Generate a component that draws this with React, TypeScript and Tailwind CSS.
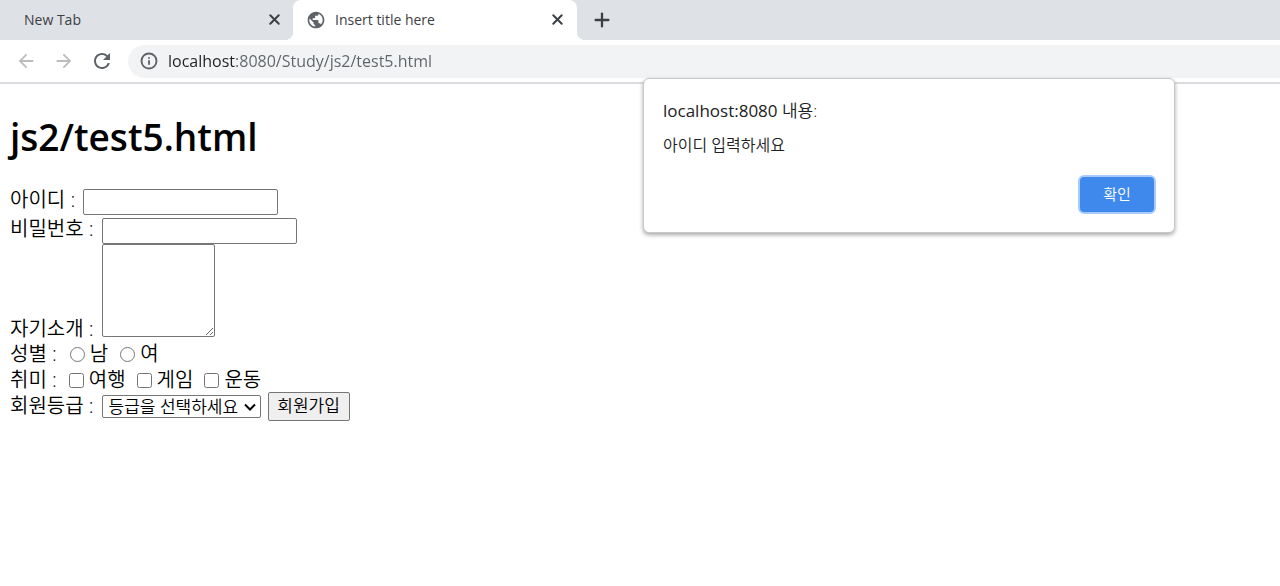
import type { ReactNode } from 'react';
import { Info, Plus, X } from 'lucide-react';
import { MdArrowBack, MdArrowForward, MdPublic, MdRefresh } from 'react-icons/md';

function TabStrip() {
  return (
    <div className="flex h-10 bg-[#dee1e6] pb-px text-[14px] font-normal text-[#3c4043]">
      <div className="flex w-[293px] items-center justify-between pl-6 pr-[10px]">
        <span>New Tab</span>
        <button type="button" aria-label="Close New Tab">
          <X size={17} strokeWidth={2.75} />
        </button>
      </div>
      <div className="relative -mb-px flex w-[284px] items-center rounded-t-lg bg-white pb-px pl-[13px] pr-[11px]">
        <span className="absolute -left-2 bottom-0 size-2 bg-[radial-gradient(circle_at_0_0,#dee1e6_8px,white_8px)]" />
        <MdPublic size={20} className="text-[#5f6368]" />
        <span className="ml-[9px] grow">Insert title here</span>
        <button type="button" aria-label="Close Insert title here">
          <X size={17} strokeWidth={2.75} />
        </button>
        <span className="absolute -right-2 bottom-0 size-2 bg-[radial-gradient(circle_at_100%_0,#dee1e6_8px,white_8px)]" />
      </div>
      <button type="button" aria-label="New tab" className="ml-[14px]">
        <Plus size={22} strokeWidth={2.5} />
      </button>
    </div>
  );
}

function Toolbar() {
  return (
    <div className="flex h-11 items-center border-b-2 border-[#dadce0] bg-white pl-[15px]">
      <button type="button" aria-label="Back" className="text-[#babcbe]">
        <MdArrowBack size={22} />
      </button>
      <button type="button" aria-label="Forward" className="ml-4 text-[#babcbe]">
        <MdArrowForward size={22} />
      </button>
      <button type="button" aria-label="Reload" className="ml-[15px] text-[#5f6368]">
        <MdRefresh size={24} />
      </button>
      <div className="ml-[14px] flex h-[33px] grow items-center rounded-l-full bg-[#f1f3f4] pl-3">
        <Info size={18} strokeWidth={2.5} className="text-[#5f6368]" />
        <input
          type="text"
          aria-label="Address"
          defaultValue="localhost:8080/Study/js2/test5.html"
          className="ml-[10px] h-6 grow bg-[linear-gradient(90deg,#202124_68px,#5f6368_68px)] bg-clip-text text-[16px] font-normal text-transparent outline-none"
        />
      </div>
    </div>
  );
}

const field = 'rounded-[2px] border border-[#767676] bg-white';

function Choice({ type, name, children }: { type: 'radio' | 'checkbox'; name: string; children: ReactNode }) {
  return (
    <label className="flex items-center gap-[5px]">
      <input type={type} name={name} className="size-[15px]" />
      {children}
    </label>
  );
}

function AlertDialog() {
  return (
    <div
      role="alertdialog"
      aria-labelledby="alert-title"
      aria-describedby="alert-text"
      className="absolute left-[643px] top-[78px] flex w-[532px] flex-col rounded-md border border-[#c8c8c8] bg-white px-[19px] pb-[18px] pt-5 shadow-[0_2px_4px_rgba(0,0,0,0.35)]"
    >
      <h2 id="alert-title" className="text-[17px] leading-6 text-[#202124]">
        <span className="font-normal">localhost:8080 </span>내용:
      </h2>
      <p id="alert-text" className="mt-3 text-[16px] leading-5 text-[#202124]">아이디 입력하세요</p>
      <button
        type="button"
        className="-mr-px mt-5 h-[39px] w-[78px] self-end rounded-md border-2 border-[#a9cbfa] bg-[#4089ec] pb-[2px] text-[15px] leading-5 text-white"
      >
        확인
      </button>
    </div>
  );
}

export default function App() {
  return (
    <div className="relative min-h-screen bg-white font-['Open_Sans','Noto_Sans_CJK_KR',sans-serif] font-[350] text-black">
      <TabStrip />
      <Toolbar />
      <main className="px-[10px] pt-[26px]">
        <h1 className="text-[37px] font-semibold leading-[54px]">js2/test5.html</h1>
        <form className="mt-6 text-[20px] leading-6" onSubmit={(e) => e.preventDefault()}>
          <div className="flex h-[29px] gap-2">
            <label htmlFor="user-id">아이디 :</label>
            <input id="user-id" type="text" className={`${field} mt-px h-[26px] w-[195px]`} />
          </div>
          <div className="flex h-[27px] gap-2">
            <label htmlFor="password">비밀번호 :</label>
            <input id="password" type="password" className={`${field} mt-px h-[26px] w-[195px]`} />
          </div>
          <div className="flex items-end gap-2">
            <label htmlFor="intro" className="-mb-1">자기소개 :</label>
            <textarea id="intro" className={`${field} h-[93px] w-[113px]`} />
          </div>
          <div className="mt-1 flex h-[26px] items-center">
            성별 :
            <div className="ml-[13px] flex gap-3">
              <Choice type="radio" name="gender">남</Choice>
              <Choice type="radio" name="gender">여</Choice>
            </div>
          </div>
          <div className="flex h-[26px] items-center">
            취미 :
            <div className="ml-3 flex gap-[11px]">
              <Choice type="checkbox" name="hobby">여행</Choice>
              <Choice type="checkbox" name="hobby">게임</Choice>
              <Choice type="checkbox" name="hobby">운동</Choice>
            </div>
          </div>
          <div className="flex h-[26px] items-center gap-[7px]">
            <label htmlFor="grade" className="mr-px">회원등급 :</label>
            <div className="relative flex">
              <select id="grade" className={`${field} mt-px h-[23px] w-[159px] appearance-none pl-[6px] text-[17px] leading-5`}>
                <option>등급을 선택하세요</option>
              </select>
              <svg viewBox="0 0 12 8" className="pointer-events-none absolute right-[5px] top-[9px] h-2 w-3" fill="none" stroke="black" strokeWidth="2">
                <path d="M1 1.5 6 6.5 11 1.5" />
              </svg>
            </div>
            <button type="submit" className="h-[29px] w-[82px] rounded-[2px] border border-[#767676] bg-[#efefef] text-[17px] leading-5">
              회원가입
            </button>
          </div>
        </form>
      </main>
      <AlertDialog />
    </div>
  );
}
